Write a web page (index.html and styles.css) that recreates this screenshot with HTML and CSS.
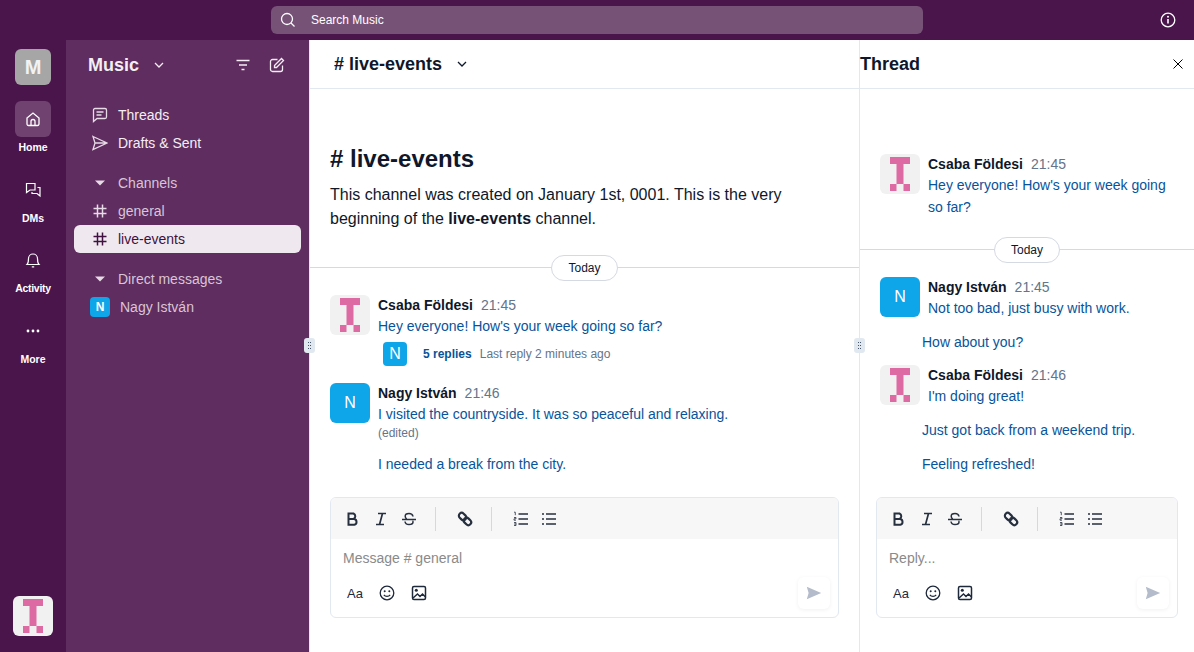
FILE: index.html
```html
<!DOCTYPE html>
<html lang="en">
<head>
    <meta charset="UTF-8">
    <title>Music - live-events</title>
    <link rel="stylesheet" href="styles.css">
</head>
<body>
<svg class="defs" width="0" height="0">
    <symbol id="logo" viewBox="0 0 40 40">
        <path d="M10 3h20v7h-6.500v20h-7v-20h-6.500z M10 30h6.500v7h-6.500z M23.500 30h6.500v7h-6.500z" fill="#de6aa3"/>
    </symbol>
    <symbol id="send" viewBox="0 0 20 20">
        <path d="M2 3l16 7-16 7 2-7z" fill="#b4bccb"/>
    </symbol>
    <symbol id="hash" viewBox="0 0 16 16">
        <path d="M5.500 1.500v13M10.500 1.500v13M1.500 5.500h13M1.500 10.500h13" fill="none" stroke="currentColor" stroke-width="1.500"/>
    </symbol>
    <symbol id="bold" viewBox="0 0 16 16">
        <path d="M3.500 2.500h5a3 3 0 0 1 0 5.500h-5zM3.500 8h5.800a3 3 0 0 1 0 5.800h-5.800z" fill="none" stroke="currentColor" stroke-width="2"/>
    </symbol>
    <symbol id="italic" viewBox="0 0 16 16">
        <path d="M5 2.500h8M3 13.500h8M9.500 2.500l-3 11" fill="none" stroke="currentColor" stroke-width="1.700"/>
    </symbol>
    <symbol id="strike" viewBox="0 0 16 16">
        <path d="M1 8.500h14M12 5.500c-.3-1.800-2-3-4-3s-3.800 1-3.800 2.700c0 1 .5 2 1.500 2.800M11.500 10c.5.300.5.700.5 1 0 1.700-1.800 2.500-4 2.500s-3.800-1-4-3" fill="none" stroke="currentColor" stroke-width="1.500"/>
    </symbol>
    <symbol id="link" viewBox="0 0 16 16">
        <g transform="rotate(45 8 8)" fill="none" stroke="currentColor" stroke-width="2.200">
            <rect x=".5" y="5.200" width="8" height="5.600" rx="2.800"/>
            <rect x="7.500" y="5.200" width="8" height="5.600" rx="2.800"/>
        </g>
    </symbol>
    <symbol id="ol" viewBox="0 0 16 16">
        <path d="M5.500 3h9.500M5.500 8h9.500M5.500 13h9.500" fill="none" stroke="currentColor" stroke-width="1.500"/>
        <path d="M1 1.200h1.300v3M1 6.500h2v1.300h-2v1.400h2M1 11.500h2v3h-2M1 13h2" fill="none" stroke="currentColor" stroke-width=".8"/>
    </symbol>
    <symbol id="ul" viewBox="0 0 16 16">
        <path d="M5 3h10M5 8h10M5 13h10M1 3h2M1 8h2M1 13h2" fill="none" stroke="currentColor" stroke-width="1.500"/>
    </symbol>
    <symbol id="smile" viewBox="0 0 16 16">
        <circle cx="8" cy="8" r="6.800" fill="none" stroke="currentColor" stroke-width="1.300"/>
        <circle cx="5.700" cy="6.300" r="1" fill="currentColor"/>
        <circle cx="10.300" cy="6.300" r="1" fill="currentColor"/>
        <path d="M4.800 9.800c1.500 2 4.900 2 6.400 0" fill="none" stroke="currentColor" stroke-width="1.200"/>
    </symbol>
    <symbol id="image" viewBox="0 0 16 16">
        <rect x="1.500" y="1.500" width="13" height="13" rx="1.500" fill="none" stroke="currentColor" stroke-width="1.500"/>
        <circle cx="5.300" cy="5.300" r="1.500" fill="currentColor"/>
        <path d="M2 13l4.500-4 2.500 2.500 2.500-2.500 3 3" fill="none" stroke="currentColor" stroke-width="1.500"/>
    </symbol>
    <symbol id="grip" viewBox="0 0 11 15">
        <rect width="11" height="15" rx="3" fill="#e2e8f0"/>
        <path d="M4 4h1v1h-1zM6 4h1v1h-1zM4 7h1v1h-1zM6 7h1v1h-1zM4 10h1v1h-1zM6 10h1v1h-1z" fill="#475569"/>
    </symbol>
</svg>

<header class="topbar">
    <div class="search">
        <svg class="search-icon" viewBox="0 0 16 16"><circle cx="7" cy="7" r="5.500" fill="none" stroke="currentColor" stroke-width="1.300"/><path d="M11 11l3.500 3.500" stroke="currentColor" stroke-width="1.300"/></svg>
        <span>Search Music</span>
    </div>
    <svg class="info" viewBox="0 0 16 16"><circle cx="8" cy="8" r="6.800" fill="none" stroke="currentColor" stroke-width="1.300"/><path d="M8 7v4.500" stroke="currentColor" stroke-width="1.600"/><circle cx="8" cy="4.800" r="1" fill="currentColor"/></svg>
</header>

<div class="app">
    <nav class="rail">
        <div class="workspace">M</div>
        <a class="rail-item active">
            <span class="rail-icon"><svg viewBox="0 0 16 16"><path d="M2 7l6-5 6 5v6a1.500 1.500 0 0 1-1.500 1.500h-9a1.500 1.500 0 0 1-1.500-1.500zM6 14.500v-4a2 2 0 0 1 4 0v4" fill="none" stroke="currentColor" stroke-width="1.300"/></svg></span>
            Home
        </a>
        <a class="rail-item">
            <span class="rail-icon"><svg viewBox="0 0 16 16"><path d="M1.500 1.500h8.500v6.500h-5l-3.500 2.500zM12.500 5.500h2.500v8.500l-3-2.500h-5v-1.500" fill="none" stroke="currentColor" stroke-width="1.200"/></svg></span>
            DMs
        </a>
        <a class="rail-item tight">
            <span class="rail-icon"><svg viewBox="0 0 16 16"><path d="M2 12.500c1.500-1.500 1.500-3 1.500-6a4.500 4.500 0 0 1 9 0c0 3 0 4.500 1.500 6zM6.800 14.800h2.400" fill="none" stroke="currentColor" stroke-width="1.200"/></svg></span>
            Activity
        </a>
        <a class="rail-item">
            <span class="rail-icon"><svg viewBox="0 0 16 16"><circle cx="3" cy="8" r="1.400" fill="currentColor"/><circle cx="8" cy="8" r="1.400" fill="currentColor"/><circle cx="13" cy="8" r="1.400" fill="currentColor"/></svg></span>
            More
        </a>
        <div class="rail-logo"><svg><use href="#logo"/></svg></div>
    </nav>

    <aside class="sidebar">
        <div class="side-head">
            <span class="side-title">Music</span>
            <svg class="chev" viewBox="0 0 12 12"><path d="M2 4l4 4 4-4" fill="none" stroke="currentColor" stroke-width="1.300"/></svg>
            <span class="spacer"></span>
            <svg class="side-tool" viewBox="0 0 16 16"><path d="M1.500 3.500h13M4 8h8M6.500 12.500h3" fill="none" stroke="currentColor" stroke-width="1.500"/></svg>
            <svg class="side-tool" viewBox="0 0 16 16"><path d="M13.500 8.500v4a2 2 0 0 1-2 2h-8a2 2 0 0 1-2-2v-8a2 2 0 0 1 2-2h5M5.500 8.500l7-7 2 2-7 7h-2z" fill="none" stroke="currentColor" stroke-width="1.300"/></svg>
        </div>

        <ul class="side-list">
            <li class="side-row bright">
                <svg viewBox="0 0 16 16"><path d="M3 1.500h10a1.500 1.500 0 0 1 1.500 1.500v7a1.500 1.500 0 0 1-1.500 1.500h-8l-3.500 3v-11.500a1.500 1.500 0 0 1 1.500-1.500zM4.500 5h7M4.500 8h5" fill="none" stroke="currentColor" stroke-width="1.300"/></svg>
                Threads
            </li>
            <li class="side-row bright">
                <svg viewBox="0 0 16 16"><path d="M1 1.500l14 6.500-14 6.500 2-6.500zM3 8h12" fill="none" stroke="currentColor" stroke-width="1.300"/></svg>
                Drafts &amp; Sent
            </li>
        </ul>

        <ul class="side-list">
            <li class="side-row">
                <svg class="caret" viewBox="0 0 16 16"><path d="M3 5.500h10l-5 5z" fill="currentColor"/></svg>
                Channels
            </li>
            <li class="side-row"><svg><use href="#hash"/></svg>general</li>
            <li class="side-row selected"><svg><use href="#hash"/></svg>live-events</li>
        </ul>

        <ul class="side-list">
            <li class="side-row">
                <svg class="caret" viewBox="0 0 16 16"><path d="M3 5.500h10l-5 5z" fill="currentColor"/></svg>
                Direct messages
            </li>
            <li class="side-row dm"><span class="dm-avatar">N</span>Nagy István</li>
        </ul>
    </aside>

    <main class="channel">
        <div class="pane-head">
            <span class="channel-name"># live-events</span>
            <svg class="chev dark" viewBox="0 0 12 12"><path d="M2 4l4 4 4-4" fill="none" stroke="currentColor" stroke-width="1.300"/></svg>
        </div>
        <div class="pane-body">
            <div class="intro">
                <h1># live-events</h1>
                <p>This channel was created on January 1st, 0001. This is the very beginning of the <b>live-events</b> channel.</p>
            </div>
            <div class="day"><span>Today</span></div>

            <div class="msg first">
                <span class="avatar logo"><svg><use href="#logo"/></svg></span>
                <div class="msg-body">
                    <div class="msg-meta"><b>Csaba Földesi</b><time>21:45</time></div>
                    <p>Hey everyone! How's your week going so far?</p>
                </div>
            </div>
            <div class="replies">
                <span class="reply-avatar">N</span>
                <b>5 replies</b>
                <span>Last reply 2 minutes ago</span>
            </div>
            <div class="msg second">
                <span class="avatar blue">N</span>
                <div class="msg-body">
                    <div class="msg-meta"><b>Nagy István</b><time>21:46</time></div>
                    <p>I visited the countryside. It was so peaceful and relaxing.</p>
                    <small>(edited)</small>
                    <p class="follow">I needed a break from the city.</p>
                </div>
            </div>
        </div>
        <div class="composer-wrap">
            <div class="composer">
                <div class="format">
                    <svg><use href="#bold"/></svg>
                    <svg><use href="#italic"/></svg>
                    <svg><use href="#strike"/></svg>
                    <i></i>
                    <svg><use href="#link"/></svg>
                    <i></i>
                    <svg><use href="#ol"/></svg>
                    <svg><use href="#ul"/></svg>
                </div>
                <div class="placeholder">Message # general</div>
                <div class="composer-foot">
                    <span class="aa">Aa</span>
                    <svg><use href="#smile"/></svg>
                    <svg><use href="#image"/></svg>
                    <span class="spacer"></span>
                    <span class="send"><svg><use href="#send"/></svg></span>
                </div>
            </div>
        </div>
        <svg class="grip"><use href="#grip"/></svg>
    </main>

    <section class="thread">
        <div class="pane-head thread-head">
            <span class="thread-title">Thread</span>
            <svg class="close" viewBox="0 0 12 12"><path d="M1.500 1.500l9 9M10.500 1.500l-9 9" fill="none" stroke="currentColor" stroke-width="1"/></svg>
        </div>
        <div class="pane-body">
            <div class="msg thread-first">
                <span class="avatar logo"><svg><use href="#logo"/></svg></span>
                <div class="msg-body">
                    <div class="msg-meta"><b>Csaba Földesi</b><time>21:45</time></div>
                    <p>Hey everyone! How's your week going so far?</p>
                </div>
            </div>
            <div class="day thread-day"><span>Today</span></div>
            <div class="msg thread-second">
                <span class="avatar blue">N</span>
                <div class="msg-body">
                    <div class="msg-meta"><b>Nagy István</b><time>21:45</time></div>
                    <p>Not too bad, just busy with work.</p>
                </div>
            </div>
            <p class="cont">How about you?</p>
            <div class="msg thread-third">
                <span class="avatar logo"><svg><use href="#logo"/></svg></span>
                <div class="msg-body">
                    <div class="msg-meta"><b>Csaba Földesi</b><time>21:46</time></div>
                    <p>I'm doing great!</p>
                </div>
            </div>
            <p class="cont">Just got back from a weekend trip.</p>
            <p class="cont">Feeling refreshed!</p>
        </div>
        <div class="composer-wrap thread-wrap">
            <div class="composer">
                <div class="format">
                    <svg><use href="#bold"/></svg>
                    <svg><use href="#italic"/></svg>
                    <svg><use href="#strike"/></svg>
                    <i></i>
                    <svg><use href="#link"/></svg>
                    <i></i>
                    <svg><use href="#ol"/></svg>
                    <svg><use href="#ul"/></svg>
                </div>
                <div class="placeholder">Reply...</div>
                <div class="composer-foot">
                    <span class="aa">Aa</span>
                    <svg><use href="#smile"/></svg>
                    <svg><use href="#image"/></svg>
                    <span class="spacer"></span>
                    <span class="send"><svg><use href="#send"/></svg></span>
                </div>
            </div>
        </div>
        <svg class="grip"><use href="#grip"/></svg>
    </section>
</div>
</body>
</html>
```

FILE: styles.css
```css
* { box-sizing: border-box; }
html, body { height: 100%; }
body { margin: 0; overflow: hidden; font-family: "Liberation Sans", Arial, sans-serif; font-size: 14px; color: #0f172a; background: #fff; display: flex; flex-direction: column; }
p, h1, ul { margin: 0; padding: 0; }
ul { list-style: none; }
.defs { position: absolute; }
.spacer { flex: 1; }

.topbar { height: 40px; flex: none; background: #4a154b; color: #fff; display: flex; align-items: center; padding: 0 18px 0 271px; }
.search { width: 652px; height: 28px; border-radius: 6px; background: #775277; display: flex; align-items: center; padding-left: 9px; font-size: 12px; }
.search-icon { width: 16px; height: 16px; margin-right: 15px; }
.info { width: 16px; height: 16px; margin-left: auto; }

.app { flex: 1; display: flex; min-height: 0; }

.rail { width: 66px; flex: none; background: #4a154b; color: #fff; display: flex; flex-direction: column; align-items: center; padding: 9px 0 16px; }
.workspace { width: 36px; height: 36px; border-radius: 6px; background: #a6a6a6; color: #f2f2f2; font-size: 20px; font-weight: bold; display: flex; align-items: center; justify-content: center; margin-bottom: 16px; }
.rail-item { display: flex; flex-direction: column; align-items: center; font-size: 10.5px; font-weight: bold; height: 70.5px; gap: 4px; }
.rail-item.tight { letter-spacing: -.3px; }
.rail-icon { width: 36px; height: 36px; border-radius: 6px; display: flex; align-items: center; justify-content: center; }
.rail-icon svg { width: 16px; height: 16px; }
.rail-item.active .rail-icon { background: #6f426f; }
.rail-logo { margin-top: auto; width: 40px; height: 40px; border-radius: 6px; background: #f1f1f1; }
.rail-logo svg { width: 40px; height: 40px; display: block; }

.sidebar { width: 243px; flex: none; background: #5f2d5f; color: #d8c5d8; padding: 0 8px; font-size: 14px; }
.side-head { height: 50px; display: flex; align-items: center; padding: 0 16px 0 14px; margin-bottom: 11px; color: #f4edf4; }
.side-title { font-size: 18px; font-weight: bold; margin-right: 14px; }
.chev { width: 12px; height: 12px; }
.chev.dark { color: #0f172a; margin-left: 14px; }
.side-tool { width: 16px; height: 16px; margin-left: 18px; }
.side-list { margin-bottom: 12px; }
.side-row { height: 28px; display: flex; align-items: center; padding-left: 18px; gap: 10px; border-radius: 6px; width: 227px; }
.side-row svg { width: 16px; height: 16px; color: #e6dbe6; flex: none; }
.side-row .caret { color: #e6dbe6; }
.side-row.bright { color: #f4edf4; }
.side-row.selected { background: #efe9ef; color: #3f1040; }
.side-row.selected svg { color: #3f1040; }
.side-row.dm { padding-left: 16px; gap: 10px; }
.dm-avatar { width: 20px; height: 20px; border-radius: 4px; background: #0ea5e9; color: #fff; font-size: 12px; font-weight: bold; display: flex; align-items: center; justify-content: center; }

.channel { position: relative; width: 550px; flex: none; display: flex; flex-direction: column; border-left: 1px solid #e2e8f0; }
.thread { position: relative; flex: 1; min-width: 0; display: flex; flex-direction: column; border-left: 1px solid #e2e8f0; }
.pane-head { height: 49px; flex: none; display: flex; align-items: center; padding: 0 24px; border-bottom: 1px solid #e2e8f0; }
.channel-name { font-size: 18px; font-weight: bold; }
.thread-head { padding: 0 10px 0 0; }
.thread-title { font-size: 18px; font-weight: bold; }
.close { width: 12px; height: 12px; margin-left: auto; color: #000; }
.pane-body { flex: 1; min-height: 0; }

.intro { padding: 56px 20px 0; height: 166px; font-size: 16px; line-height: 24px; }
.intro h1 { font-size: 24px; line-height: 28px; margin-bottom: 10px; }
.day { position: relative; height: 26px; display: flex; align-items: center; justify-content: center; font-size: 12px; }
.day::before { content: ""; position: absolute; left: 0; right: 0; top: 12px; height: 1px; background: #d4d9e2; }
.day span { position: relative; height: 26px; padding: 0 16px; border: 1px solid #d4d9e2; border-radius: 13px; background: #fff; display: flex; align-items: center; }

.msg { display: flex; padding: 0 20px; gap: 8px; }
.msg.first { margin-top: 14px; }
.msg.second { margin-top: 17px; }
.avatar { width: 40px; height: 40px; flex: none; border-radius: 6px; }
.avatar svg { width: 40px; height: 40px; display: block; }
.avatar.logo { background: #f1f1f1; }
.avatar.blue { background: #0ea5e9; color: #fff; font-size: 16px; display: flex; align-items: center; justify-content: center; }
.msg-body { min-width: 0; }
.msg-meta { height: 21px; display: flex; align-items: baseline; gap: 8px; line-height: 21px; color: #0f172a; }
.msg-meta time { color: #64748b; }
.msg-body p, .cont { color: #07549b; line-height: 21px; }
.msg-body small { display: block; font-size: 12px; color: #64748b; line-height: 17px; }
.msg-body p.follow { margin-top: 12px; }
.replies { display: flex; align-items: center; height: 24px; margin: 5px 0 0 73px; font-size: 12px; color: #64748b; }
.replies b { color: #07549b; margin: 0 8px 0 16px; }
.reply-avatar { width: 24px; height: 24px; border-radius: 4px; background: #0ea5e9; color: #fff; font-size: 16px; display: flex; align-items: center; justify-content: center; }

.thread-first { margin-top: 65px; }
.thread-first .msg-meta { height: 20px; }
.thread-first .msg-body p { line-height: 22px; }
.thread-day { margin-top: 19px; }
.thread-second { margin-top: 14px; }
.cont { padding-left: 62px; margin-top: 13px; }
.thread-third { margin-top: 12px; }

.composer-wrap { flex: none; padding: 0 20px 34px; }
.thread-wrap { padding: 0 16px 34px; }
.composer { height: 121px; border: 1px solid #e2e8f0; border-radius: 6px; overflow: hidden; }
.format { height: 41px; background: #f7f7f8; display: flex; align-items: center; padding: 0 14px; gap: 12px; color: #27303f; }
.format svg { width: 16px; height: 16px; flex: none; }
.format i { width: 1px; height: 24px; background: #d8d8d8; margin: 0 9px 0 6px; }
.placeholder { height: 36px; padding: 11px 12px 0; color: #8a8a8a; }
.composer-foot { height: 36px; display: flex; align-items: center; padding: 0 8px 0 16px; gap: 16px; color: #1e293b; }
.composer-foot svg { width: 16px; height: 16px; }
.aa { font-size: 13px; width: 16px; white-space: nowrap; }
.send { width: 32px; height: 32px; border-radius: 6px; background: #fff; box-shadow: 0 1px 4px rgba(15, 23, 42, .06); display: flex; align-items: center; justify-content: center; }
.composer-foot .send svg { width: 18px; height: 18px; }

.grip { position: absolute; top: 298px; left: -6px; width: 11px; height: 15px; }
```
